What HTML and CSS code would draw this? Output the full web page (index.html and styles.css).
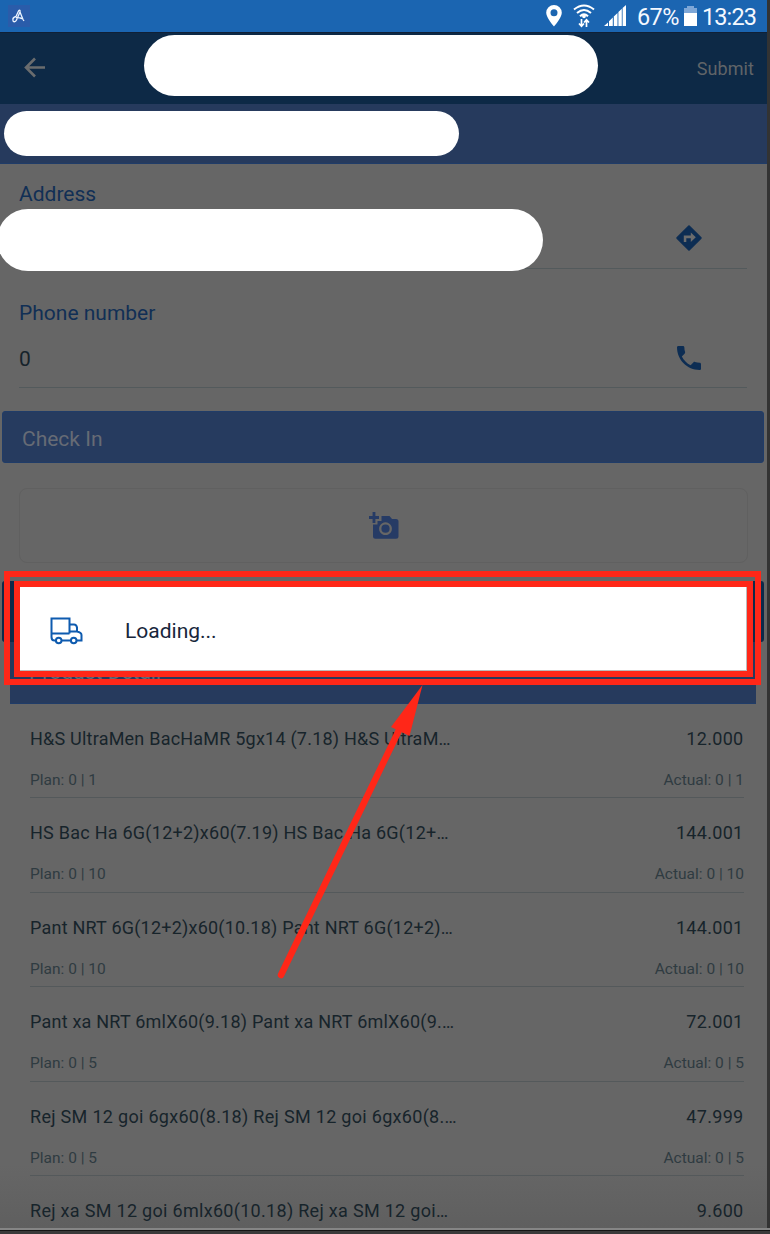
FILE: index.html
```html
<!DOCTYPE html>
<html lang="en">
<head>
<meta charset="utf-8">
<title>Delivery</title>
<link rel="stylesheet" href="styles.css">
</head>
<body>
<div class="device">
  <main class="screen">
    <div class="status">
      <svg class="app-mark" width="22" height="22" viewBox="0 0 22 22"><rect width="22" height="22" fill="#2a5caa"/><path d="M5 15.500c-.5-2 1-3.500 3-4l2.500-5.500c1-1.500 2-.5 1.500 1L8.500 15c-1 2.500-3.500 2-3.500.5zM12 7l3 7.500 1 1.500M8 12.500c3 0 5 0 6 1.500" fill="none" stroke="#edf4ff" stroke-width="1.300"/></svg>
      <div class="status-right">
        <svg class="pin" width="16" height="22" viewBox="0 0 16 22"><path fill="#fff" fill-rule="evenodd" d="M8 0a7.800 7.800 0 0 0-7.800 7.800C.2 13 8 21.500 8 21.500S15.800 13 15.800 7.800A7.800 7.800 0 0 0 8 0zm0 4.300a3.500 3.500 0 1 1 0 7 3.500 3.500 0 0 1 0-7z"/></svg>
        <svg class="wifi" width="22" height="24" viewBox="0 0 22 24"><g fill="none" stroke="#fff" stroke-width="2"><path d="M1 5.500Q11-2.500 21 5.500M4 9Q11 3 18 9M7 12.200Q11 8.500 15 12.200"/><path d="M8.500 15v7M6 19.500l2.500 2.700 2.500-2.700M13.500 23v-7M11 18.500l2.500-2.700 2.500 2.700" stroke-width="1.700"/></g><circle cx="11" cy="12.500" r="1.800" fill="#fff"/></svg>
        <svg class="signal" width="22" height="21" viewBox="0 0 22 21"><path fill="#fff" d="M0 21l4-3.500V21zM5 21v-4.800l3.800-3.600V21zM9.800 21v-9.500l3.700-3.500V21zM14.400 21V7l3.400-3.200V21zM18.600 21V3L22 0v21z"/></svg>
        <span class="battery-text">67%</span>
        <svg class="battery" width="13" height="20" viewBox="0 0 13 20"><path fill="#7ea7d7" d="M3 0h7v2h3v6H0V2h3z"/><path fill="#fff" d="M0 7h13v13H0z"/></svg>
        <span class="clock">13:23</span>
      </div>
    </div>

    <header class="topbar">
      <svg width="22" height="21" viewBox="0 0 22 21"><path d="M21 10.500H2M11 1.500l-9 9 9 9" fill="none" stroke="#6a6c6e" stroke-width="2.600"/></svg>
      <span class="submit">Submit</span>
      <span class="mask mask-title"></span>
    </header>
    <div class="customer"><span class="mask mask-customer"></span></div>

    <section class="field address">
      <div class="label">Address</div>
      <div class="value"><span></span>
        <svg class="directions" width="26" height="26" viewBox="0 0 26 26"><path d="M13 1.200L24.800 13 13 24.800 1.200 13z" fill="#0d2d53" stroke="#0d2d53" stroke-width="1.800" stroke-linejoin="round"/><path d="M7.800 17v-6.500h7V7.500l5 4.700-5 4.700v-3.600h-4.500V17z" fill="#6b6c6d"/></svg>
      </div>
      <span class="mask mask-address"></span>
    </section>
    <section class="field phone">
      <div class="label">Phone number</div>
      <div class="value"><span>0</span>
        <svg class="call" width="24" height="24" viewBox="3 3 18 18"><path fill="#0d2d53" d="M6.620 10.790c1.440 2.830 3.760 5.140 6.590 6.590l2.200-2.200c.27-.27.67-.36 1.020-.24 1.120.37 2.330.57 3.570.57.55 0 1 .45 1 1V20c0 .55-.45 1-1 1-9.390 0-17-7.610-17-17 0-.55.45-1 1-1h3.500c.55 0 1 .45 1 1 0 1.250.2 2.450.57 3.570.11.35.03.74-.25 1.020l-2.200 2.200z"/></svg>
      </div>
    </section>

    <div class="checkin">Check In</div>
    <div class="photo">
      <svg width="30" height="27" viewBox="0 0 30 27"><path fill="#263b65" fill-rule="evenodd" d="M12.500 4h8L23 7h4q2.500 0 2.500 2.500v14.700q0 2.500-2.500 2.500H6.500Q4 26.700 4 24.200V12.500h4.500V9h4zM16.500 10.300a6.400 6.400 0 1 0 .01 0z"/><circle cx="16.500" cy="16.700" r="4.100" fill="#263b65"/><path d="M5 0v11M0 5.500h10" stroke="#263b65" stroke-width="2.800"/></svg>
    </div>
    <div class="action"></div>
    <div class="section-title">Product Detail</div>

    <div class="products">
      <article class="product"><div class="main"><span class="n1">H&amp;S UltraMen BacHaMR 5gx14 (7.18) H&amp;S UltraM…</span><span>12.000</span></div><div class="sub"><span>Plan: 0 | 1</span><span>Actual: 0 | 1</span></div></article>
      <article class="product"><div class="main"><span class="n2">HS Bac Ha 6G(12+2)x60(7.19) HS Bac Ha 6G(12+…</span><span>144.001</span></div><div class="sub"><span>Plan: 0 | 10</span><span>Actual: 0 | 10</span></div></article>
      <article class="product"><div class="main"><span class="n3">Pant NRT 6G(12+2)x60(10.18) Pant NRT 6G(12+2)…</span><span>144.001</span></div><div class="sub"><span>Plan: 0 | 10</span><span>Actual: 0 | 10</span></div></article>
      <article class="product"><div class="main"><span class="n4">Pant xa NRT 6mlX60(9.18) Pant xa NRT 6mlX60(9.…</span><span>72.001</span></div><div class="sub"><span>Plan: 0 | 5</span><span>Actual: 0 | 5</span></div></article>
      <article class="product"><div class="main"><span class="n5">Rej SM 12 goi 6gx60(8.18) Rej SM 12 goi 6gx60(8.…</span><span>47.999</span></div><div class="sub"><span>Plan: 0 | 5</span><span>Actual: 0 | 5</span></div></article>
      <article class="product"><div class="main"><span class="n6">Rej xa SM 12 goi 6mlx60(10.18) Rej xa SM 12 goi…</span><span>9.600</span></div></article>
    </div>
  </main>
  <div class="bottom-edge"></div>

  <div class="outer-frame"></div>
  <div class="dialog">
    <svg width="33" height="28" viewBox="0 0 33 28"><g fill="none" stroke="#0e5baf" stroke-width="2"><path d="M5.500 23.500H4.500Q1.500 23.500 1.500 20V1.500h18v15M1.500 16.500h18M19.500 7.500h4.500q2.500 0 3 3v4h-7.500M27 14.500q4.500 1 4.500 3.500v5.500h-4.500M12 23.500h8"/><circle cx="8.700" cy="23.500" r="2.800"/><circle cx="23.700" cy="23.500" r="2.800"/></g></svg>
    <span>Loading...</span>
  </div>
  <svg class="arrow" width="150" height="300" viewBox="275 683 150 300"><path d="M281 975L401 726" stroke="#ff2718" stroke-width="6.500" stroke-linecap="round"/><path d="M422.500 685L391 727l18.500 9z" fill="#ff2718"/></svg>
</div>
</body>
</html>
```
FILE: styles.css
```css
* { box-sizing: border-box; }
body { margin: 0; width: 770px; height: 1234px; overflow: hidden; background: #333; font-family: Roboto, "Liberation Sans", sans-serif; }
svg { display: block; flex: none; }
.device { position: relative; height: 1234px; overflow: hidden; }
.screen { width: 767px; height: 1228px; overflow: hidden; background: linear-gradient(#666 0 1165px, #5f5f5f); }

.status { display: flex; justify-content: space-between; height: 32px; padding: 5px 10px 0 8px; background: #1b65b1; color: #f4f8ff; }
.status-right { display: flex; align-items: flex-start; font-size: 23.500px; line-height: 25px; }
.pin { margin-right: 1px; }
.wifi { margin: -1px 0 0 11px; }
.signal { margin-left: 9px; }
.battery-text { margin-left: 11px; width: 42px; letter-spacing: -0.6px; }
.battery { margin: 1px 0 0 5px; }
.clock { margin-left: 5px; width: 55px; letter-spacing: -0.9px; }
.wifi { margin-left: 10px; }

.topbar { position: relative; display: flex; align-items: center; justify-content: space-between; height: 72px; padding: 0 13px 2px 24px; border-top: 1px solid #102036; background: #0d2946; color: #606468; }
.submit { font-size: 18px; letter-spacing: 0.1px; padding-top: 2px; }
.mask { position: absolute; background: #fff; }
.mask-title { left: 144px; top: 2px; width: 454px; height: 61px; border-radius: 31px; }
.customer { position: relative; height: 60px; background: #263a5d; border-bottom: 1px solid #203c68; }
.mask-customer { left: 4px; top: 7px; width: 455px; height: 45px; border-radius: 23px; }

.field { position: relative; margin: 0 20px 0 19px; border-bottom: 1px solid #535a5c; }
.address { height: 105px; padding-top: 18px; }
.phone { height: 119px; padding-top: 32px; }
.label { font-size: 21px; line-height: 25px; color: #112f55; }
.value { display: flex; align-items: center; justify-content: space-between; height: 26px; padding-right: 45px; font-size: 21px; color: #16232b; }
.address .value { margin-top: 18px; }
.phone .value { margin-top: 19px; padding-right: 46px; }
.phone .value span { padding-top: 2px; }
.mask-address { left: -22px; top: 45px; width: 546px; height: 62px; border-radius: 31px; }

.checkin { height: 52px; margin: 23px 3px 0 2px; padding-left: 19px; border: 1px solid #203c68; border-radius: 3px; background: #263b5f; color: #666b75; font-size: 21px; line-height: 54px; }
.photo { display: flex; align-items: center; justify-content: center; height: 75px; margin: 25px 19px 0; border: 1px solid #606060; border-radius: 8px; }
.action { height: 61px; margin: 18px 3px 0 2px; border-radius: 3px; background: #0d2a49; }
.section-title { height: 62px; margin: 0 11px 0 10px; padding: 18px 0 0 19px; background: #263a5d; border-bottom: 1px solid #203c68; color: #686d78; font-size: 21px; line-height: 25px; }

.products { margin: 0 23px 0 30px; color: #17242b; }
.product { height: 94.4px; padding-top: 23px; border-bottom: 1px solid #54595b; }
.main, .sub { display: flex; justify-content: space-between; white-space: nowrap; }
.main { font-size: 18px; line-height: 24px; letter-spacing: 0.3px; }
.main span:last-child { margin-right: 0.5px; }
.n1, .n3, .n4 { letter-spacing: 0.22px; }
.n2 { letter-spacing: 0.25px; }
.sub { margin-top: 19px; font-size: 15.500px; line-height: 20px; color: #2f3b41; }
.bottom-edge { height: 6px; border-top: 2px solid #858585; background: linear-gradient(#151515 1px, #3a3a3a 1px); }

.outer-frame { position: absolute; left: 4px; top: 571px; width: 757px; height: 114px; border: 6px solid #ff2718; }
.dialog { position: absolute; left: 14px; top: 581px; width: 739px; height: 96px; display: flex; align-items: center; gap: 42px; padding: 0 0 0 30px; border: 6px solid #ff2718; background: #fff; color: #17263b; font-size: 21px; box-shadow: inset -1px -1px #bbb; }
.dialog span { padding-top: 3px; }
.dialog svg { margin-top: 3px; }
.arrow { position: absolute; left: 275px; top: 683px; }
```
